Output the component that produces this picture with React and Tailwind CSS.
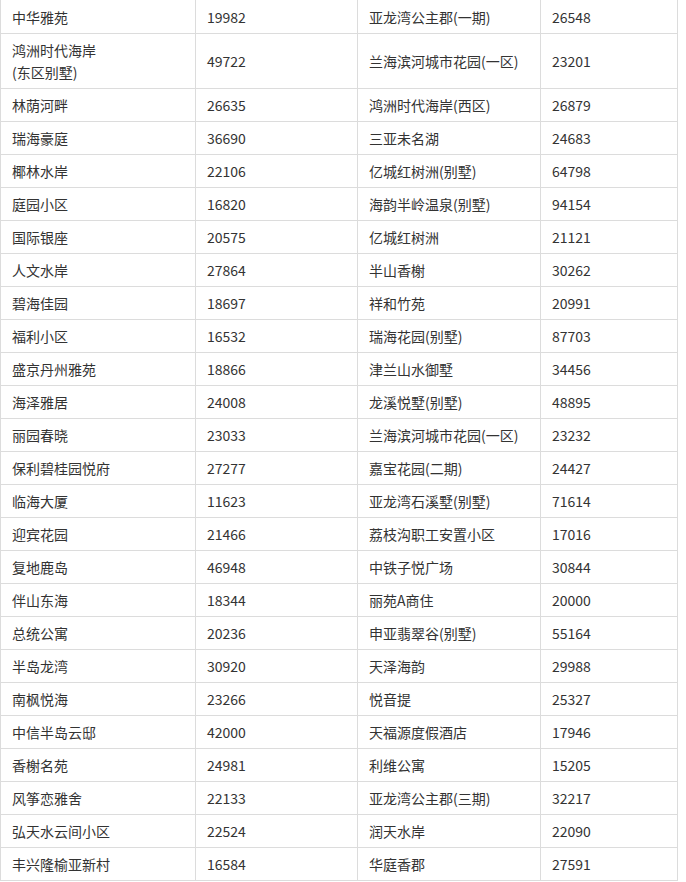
const rows = [
  [["中华雅苑"], "19982", "亚龙湾公主郡(一期)", "26548"],
  [["鸿洲时代海岸", "(东区别墅)"], "49722", "兰海滨河城市花园(一区)", "23201"],
  [["林荫河畔"], "26635", "鸿洲时代海岸(西区)", "26879"],
  [["瑞海豪庭"], "36690", "三亚未名湖", "24683"],
  [["椰林水岸"], "22106", "亿城红树洲(别墅)", "64798"],
  [["庭园小区"], "16820", "海韵半岭温泉(别墅)", "94154"],
  [["国际银座"], "20575", "亿城红树洲", "21121"],
  [["人文水岸"], "27864", "半山香榭", "30262"],
  [["碧海佳园"], "18697", "祥和竹苑", "20991"],
  [["福利小区"], "16532", "瑞海花园(别墅)", "87703"],
  [["盛京丹州雅苑"], "18866", "津兰山水御墅", "34456"],
  [["海泽雅居"], "24008", "龙溪悦墅(别墅)", "48895"],
  [["丽园春晓"], "23033", "兰海滨河城市花园(一区)", "23232"],
  [["保利碧桂园悦府"], "27277", "嘉宝花园(二期)", "24427"],
  [["临海大厦"], "11623", "亚龙湾石溪墅(别墅)", "71614"],
  [["迎宾花园"], "21466", "荔枝沟职工安置小区", "17016"],
  [["复地鹿岛"], "46948", "中铁子悦广场", "30844"],
  [["伴山东海"], "18344", "丽苑A商住", "20000"],
  [["总统公寓"], "20236", "申亚翡翠谷(别墅)", "55164"],
  [["半岛龙湾"], "30920", "天泽海韵", "29988"],
  [["南枫悦海"], "23266", "悦音提", "25327"],
  [["中信半岛云邸"], "42000", "天福源度假酒店", "17946"],
  [["香榭名苑"], "24981", "利维公寓", "15205"],
  [["风筝恋雅舍"], "22133", "亚龙湾公主郡(三期)", "32217"],
  [["弘天水云间小区"], "22524", "润天水岸", "22090"],
  [["丰兴隆榆亚新村"], "16584", "华庭香郡", "27591"],
];

function Cell({ children, h }) {
  return (
    <div
      className={`flex flex-col justify-center border-r border-b border-[#dcdcdc] pl-[11px] pr-2 ${h}`}
    >
      {children}
    </div>
  );
}

export default function App() {
  return (
    <div
      className="w-[686px] h-[882px] overflow-hidden bg-white text-[14px] text-[#333333]"
      style={{ fontFamily: '"Noto Sans CJK SC", "Noto Sans", sans-serif' }}
    >
      <div className="w-[678px] border-l border-[#dcdcdc] grid grid-cols-[195px_162px_183px_137px]">
        {rows.map((r, i) => {
          const h = i === 0 ? "h-[34px]" : r[0].length > 1 ? "h-[55px]" : "h-[33px]";
          return [
            <Cell key={i + "a"} h={h}>
              {r[0].map((t, j) => (
                <div key={j} className="leading-[22px]">
                  {t}
                </div>
              ))}
            </Cell>,
            <Cell key={i + "b"} h={h}>
              <div className="leading-[22px]">{r[1]}</div>
            </Cell>,
            <Cell key={i + "c"} h={h}>
              <div className="leading-[22px]">{r[2]}</div>
            </Cell>,
            <Cell key={i + "d"} h={h}>
              <div className="leading-[22px]">{r[3]}</div>
            </Cell>,
          ];
        })}
      </div>
    </div>
  );
}
